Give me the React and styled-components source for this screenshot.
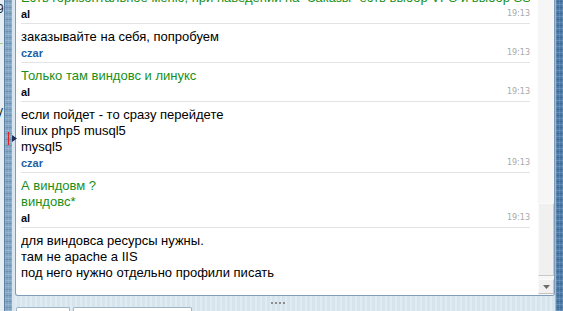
import React from 'react';
import styled, { createGlobalStyle } from 'styled-components';

const messages = [
  { id: 1, author: 'al', lines: ['Есть горизонтальное меню, при наведении на "Заказы" есть выбор VPS и выбор SSL'] },
  { id: 2, author: 'czar', lines: ['заказывайте на себя, попробуем'] },
  { id: 3, author: 'al', lines: ['Только там виндовс и линукс'] },
  { id: 4, author: 'czar', lines: ['если пойдет - то сразу перейдете', 'linux php5 musql5', 'mysql5'] },
  { id: 5, author: 'al', lines: ['А виндовм ?', 'виндовс*'] },
  {
    id: 6,
    author: null,
    lines: ['для виндовса ресурсы нужны.', 'там не apache a IIS', 'под него нужно отдельно профили писать'],
  },
];

const App = () => {
  return (
    <>
      <GlobalStyle />
      <Screen>
        <Sliver>
          <SliverGlyph $top={2}>9</SliverGlyph>
          <SliverRule />
          <SliverGlyph $top={60}>y</SliverGlyph>
        </Sliver>
        <BlueBar $dark={false} />
        <Middle>
          <Panel>
            <Viewport>
              <MessageList>
                {messages.map((m) => (
                  <Message key={m.id} $last={!m.author}>
                    {m.lines.map((line, i) => (
                      <Line key={i} $green={m.author === 'al'}>
                        {line}
                      </Line>
                    ))}
                    {m.author && (
                      <AuthorRow>
                        <Author $blue={m.author === 'czar'}>{m.author}</Author>
                        <Time>19:13</Time>
                      </AuthorRow>
                    )}
                  </Message>
                ))}
              </MessageList>
            </Viewport>
            <Scrollbar>
              <Track />
              <Thumb />
              <TrackGap />
              <ArrowButton>
                <svg width="7" height="4" viewBox="0 0 7 4">
                  <path d="M0 0h7L3.5 4z" fill="#6b6b6b" />
                </svg>
              </ArrowButton>
            </Scrollbar>
          </Panel>
          <Bottom>
            <Grip>
              <Dot />
              <Dot />
              <Dot />
              <Dot />
            </Grip>
            <Tabs>
              <Tab $w={54} />
              <Tab $w={119} />
            </Tabs>
          </Bottom>
        </Middle>
        <BlueBar $dark />
        <SplitterHandle>
          <RedMark />
          <svg width="5" height="7" viewBox="0 0 5 7">
            <path d="M0 0l5 3.5L0 7z" fill="#1c2f5a" />
          </svg>
        </SplitterHandle>
      </Screen>
    </>
  );
};

export default App;

const GlobalStyle = createGlobalStyle`
  html, body {
    margin: 0;
    padding: 0;
    background: #d9e6ef;
  }
`;

const Screen = styled.div`
  position: relative;
  display: flex;
  width: 563px;
  height: 311px;
  overflow: hidden;
  background: #d9e6ef;
  font-family: "Liberation Sans", Arial, sans-serif;
`;

const Sliver = styled.div`
  width: 5px;
  flex-shrink: 0;
  overflow: hidden;
  background: #e6edf3;
  border-right: 1px solid #5b7fa0;
  box-sizing: border-box;
`;

const SliverGlyph = styled.div`
  margin-top: ${(p) => p.$top}px;
  margin-left: -3px;
  font-size: 12px;
  line-height: 14px;
  color: #222;
`;

const SliverRule = styled.div`
  margin-top: 27px;
  width: 3px;
  height: 1px;
  background: #a8d08c;
`;

const BlueBar = styled.div`
  flex: ${(p) => (p.$dark ? '1' : '0 0 7px')};
  background-color: ${(p) => (p.$dark ? '#4677a6' : '#7ea3c3')};
  background-image: repeating-linear-gradient(
      0deg,
      rgba(255, 255, 255, 0.14) 0 1px,
      transparent 1px 3px,
      rgba(0, 0, 0, 0.1) 3px 4px,
      transparent 4px 6px
    ),
    repeating-linear-gradient(
      90deg,
      rgba(255, 255, 255, 0.12) 0 1px,
      transparent 1px 3px
    );
  border-left: ${(p) => (p.$dark ? '1px solid #9fbad2' : 'none')};
`;

const Middle = styled.div`
  width: 543px;
  flex-shrink: 0;
  display: flex;
  flex-direction: column;
  padding-left: 3px;
  box-sizing: border-box;
`;

const Panel = styled.div`
  display: flex;
  flex-shrink: 0;
  height: 296px;
  background: #fff;
  border: 1px solid #7f9db9;
  border-top: none;
  border-radius: 0 0 3px 3px;
  box-sizing: border-box;
  overflow: hidden;
`;

const Viewport = styled.div`
  flex: 1;
  overflow: hidden;
`;

const MessageList = styled.div`
  margin-top: -15px;
  padding: 0 8px 0 5px;
`;

const Message = styled.div`
  padding: 5px 0 1px;
  border-bottom: ${(p) => (p.$last ? 'none' : '1px solid #e3e3e3')};
`;

const Line = styled.div`
  font-size: 13px;
  line-height: 16px;
  height: 16px;
  white-space: nowrap;
  overflow: hidden;
  color: ${(p) => (p.$green ? '#188f18' : '#000')};
`;

const AuthorRow = styled.div`
  display: flex;
  align-items: baseline;
  justify-content: space-between;
  height: 16px;
  line-height: 17px;
`;

const Author = styled.span`
  font-size: 11px;
  font-weight: bold;
  color: ${(p) => (p.$blue ? '#1d5fa8' : '#0a0a14')};
`;

const Time = styled.span`
  font-family: "DejaVu Sans", Verdana, sans-serif;
  font-size: 8px;
  color: #a9a9a9;
  position: relative;
  top: -2px;
`;

const Scrollbar = styled.div`
  width: 16px;
  flex-shrink: 0;
  display: flex;
  flex-direction: column;
  background: #f6f6f6;
  padding-bottom: 1px;
  box-sizing: border-box;
`;

const Track = styled.div`
  flex: 1;
`;

const Thumb = styled.div`
  height: 73px;
  background: #f0f0f0;
  border: 1px solid #c9c9c9;
  border-top-color: #fafafa;
  border-left-color: #fafafa;
  box-sizing: border-box;
`;

const TrackGap = styled.div`
  height: 3px;
`;

const ArrowButton = styled.div`
  height: 15px;
  display: flex;
  align-items: center;
  justify-content: center;
  background: #f0f0f0;
  border: 1px solid #c4c4c4;
  border-top-color: #fafafa;
  border-left-color: #fafafa;
  box-sizing: border-box;
`;

const Bottom = styled.div`
  height: 15px;
  flex-shrink: 0;
  display: flex;
  flex-direction: column;
  background-color: #d6e4ee;
  background-image: repeating-linear-gradient(
    90deg,
    rgba(255, 255, 255, 0.25) 0 2px,
    transparent 2px 5px
  );
`;

const Grip = styled.div`
  display: flex;
  justify-content: center;
  gap: 2px;
  margin-top: 6px;
  padding-right: 14px;
`;

const Dot = styled.div`
  width: 2px;
  height: 2px;
  background: #8c8c8c;
`;

const Tabs = styled.div`
  display: flex;
  gap: 3px;
  margin-top: 3px;
  padding-left: 1px;
`;

const Tab = styled.div`
  width: ${(p) => p.$w}px;
  height: 8px;
  background: #fff;
  border: 1px solid #9fb4c7;
  border-bottom: none;
  border-radius: 2px 2px 0 0;
  box-sizing: border-box;
`;

const SplitterHandle = styled.div`
  position: absolute;
  left: 8px;
  top: 132px;
  display: flex;
  align-items: center;
  gap: 3px;
`;

const RedMark = styled.div`
  width: 1px;
  height: 13px;
  background: #e0201c;
`;
